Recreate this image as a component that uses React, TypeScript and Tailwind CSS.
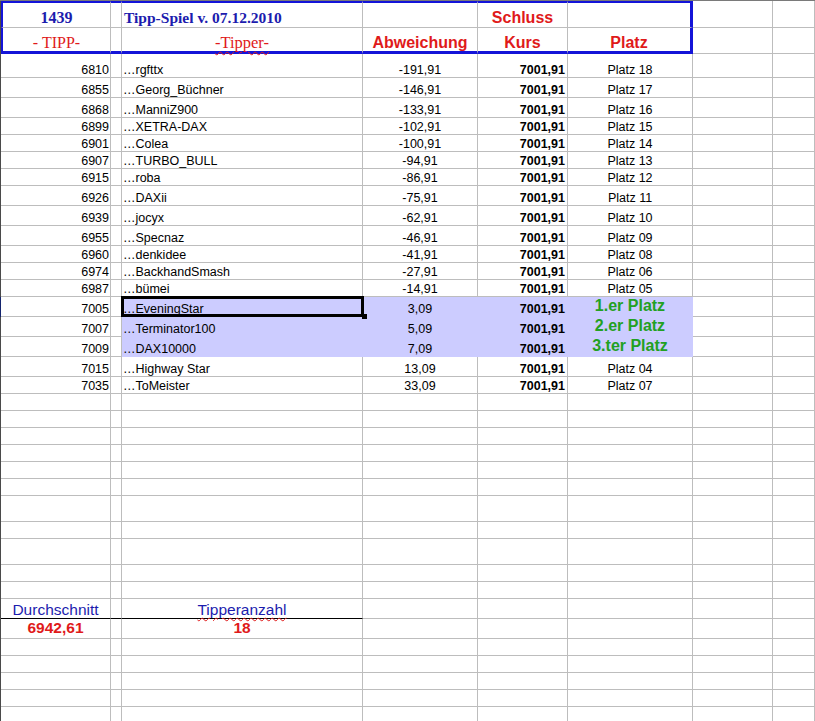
// Tipp-Spiel sheet — a spreadsheet-style ranking table of DAX guesses.
// Column widths and row heights mirror the grid of the original workbook.

import type { ReactNode } from "react";
import { twMerge } from "tailwind-merge";

const COL_W = [
  "w-[110px]",
  "w-[11px]",
  "w-[241px]",
  "w-[115px]",
  "w-[90px]",
  "w-[125px]",
  "w-[80px]",
  "flex-1",
];

const ROW_H: Record<number, string> = {
  17: "h-[17px]",
  20: "h-[20px]",
  24: "h-[24px]",
  26: "h-[26px]",
  27: "h-[27px]",
};

type Tip = {
  tipp: string;
  name: string;
  diff: string;
  platz: string;
  h: number;
  win?: boolean;
  sel?: boolean;
};

const tips: Tip[] = [
  { tipp: "6810", name: "rgfttx", diff: "-191,91", platz: "Platz 18", h: 24 },
  { tipp: "6855", name: "Georg_Büchner", diff: "-146,91", platz: "Platz 17", h: 20 },
  { tipp: "6868", name: "ManniZ900", diff: "-133,91", platz: "Platz 16", h: 20 },
  { tipp: "6899", name: "XETRA-DAX", diff: "-102,91", platz: "Platz 15", h: 17 },
  { tipp: "6901", name: "Colea", diff: "-100,91", platz: "Platz 14", h: 17 },
  { tipp: "6907", name: "TURBO_BULL", diff: "-94,91", platz: "Platz 13", h: 17 },
  { tipp: "6915", name: "roba", diff: "-86,91", platz: "Platz 12", h: 17 },
  { tipp: "6926", name: "DAXii", diff: "-75,91", platz: "Platz 11", h: 20 },
  { tipp: "6939", name: "jocyx", diff: "-62,91", platz: "Platz 10", h: 20 },
  { tipp: "6955", name: "Specnaz", diff: "-46,91", platz: "Platz 09", h: 20 },
  { tipp: "6960", name: "denkidee", diff: "-41,91", platz: "Platz 08", h: 17 },
  { tipp: "6974", name: "BackhandSmash", diff: "-27,91", platz: "Platz 06", h: 17 },
  { tipp: "6987", name: "bümei", diff: "-14,91", platz: "Platz 05", h: 17 },
  { tipp: "7005", name: "EveningStar", diff: "3,09", platz: "1.er Platz", h: 20, win: true, sel: true },
  { tipp: "7007", name: "Terminator100", diff: "5,09", platz: "2.er Platz", h: 20, win: true },
  { tipp: "7009", name: "DAX10000", diff: "7,09", platz: "3.ter Platz", h: 20, win: true },
  { tipp: "7015", name: "Highway Star", diff: "13,09", platz: "Platz 04", h: 20 },
  { tipp: "7035", name: "ToMeister", diff: "33,09", platz: "Platz 07", h: 17 },
];

const emptyAbove = [17, 17, 17, 17, 17, 17, 26, 17, 26, 17, 17];
const emptyBelow = [17, 17, 17, 17, 17];

function Cell({ col, className, children }: { col: number; className?: string; children?: ReactNode }) {
  return (
    <div
      className={twMerge(
        "flex shrink-0 items-end whitespace-nowrap border-b border-r border-[#bdbdbd]",
        COL_W[col],
        className,
      )}
    >
      {children}
    </div>
  );
}

function Row({ h, className, children }: { h: number; className?: string; children?: ReactNode }) {
  return <div className={twMerge("flex border-l border-[#4a4a4a]", ROW_H[h], className)}>{children}</div>;
}

function EmptyRow({ h }: { h: number }) {
  return (
    <Row h={h}>
      {COL_W.map((_, i) => (
        <Cell key={i} col={i} />
      ))}
    </Row>
  );
}

export default function App() {
  return (
    <div className="h-[721px] w-[815px] overflow-hidden border-t border-[#7a7a7a] bg-white font-['Liberation_Sans',Arial,sans-serif] text-[12.5px] leading-[14px] text-black">
      {/* header block, framed in blue */}
      <Row h={27}>
        <Cell col={0} className="justify-center border-l-2 border-t-2 border-l-[#1414d8] border-t-[#1414d8]">
          <span className="font-['Liberation_Serif','Times_New_Roman',serif] text-[16px] font-bold leading-[19px] text-[#1c1cae]">
            1439
          </span>
        </Cell>
        <Cell col={1} className="border-t-2 border-t-[#1414d8]" />
        <Cell col={2} className="border-t-2 border-t-[#1414d8] pl-[2px]">
          <span className="font-['Liberation_Serif','Times_New_Roman',serif] text-[15.5px] font-bold leading-[19px] text-[#1c1cae]">
            Tipp-Spiel v. 07.12.2010
          </span>
        </Cell>
        <Cell col={3} className="border-t-2 border-t-[#1414d8]" />
        <Cell col={4} className="justify-center border-t-2 border-t-[#1414d8]">
          <span className="text-[16px] font-bold leading-[19px] text-[#e01a1a]">Schluss</span>
        </Cell>
        <Cell col={5} className="border-r-[3px] border-t-2 border-r-[#1414d8] border-t-[#1414d8]" />
        <Cell col={6} />
        <Cell col={7} />
      </Row>
      <Row h={26}>
        <Cell col={0} className="justify-center border-b-[3px] border-l-2 border-b-[#1414d8] border-l-[#1414d8]">
          <span className="font-['Liberation_Serif','Times_New_Roman',serif] text-[16px] leading-[16px] text-[#e01a1a]">
            - TIPP-
          </span>
        </Cell>
        <Cell col={1} className="border-b-[3px] border-b-[#1414d8]" />
        <Cell col={2} className="justify-center border-b-[3px] border-b-[#1414d8]">
          <span className="font-['Liberation_Serif','Times_New_Roman',serif] text-[16.5px] leading-[16px] text-[#e01a1a] underline decoration-[#e01a1a] decoration-wavy decoration-1 underline-offset-[3px]">
            -Tipper-
          </span>
        </Cell>
        <Cell col={3} className="justify-center border-b-[3px] border-b-[#1414d8]">
          <span className="text-[16px] font-bold leading-[16px] text-[#e01a1a]">Abweichung</span>
        </Cell>
        <Cell col={4} className="justify-center border-b-[3px] border-b-[#1414d8]">
          <span className="text-[16px] font-bold leading-[16px] text-[#e01a1a]">Kurs</span>
        </Cell>
        <Cell col={5} className="justify-center border-b-[3px] border-r-[3px] border-b-[#1414d8] border-r-[#1414d8]">
          <span className="text-[16px] font-bold leading-[16px] text-[#e01a1a]">Platz</span>
        </Cell>
        <Cell col={6} />
        <Cell col={7} />
      </Row>

      {/* one row per tipper, sorted by guess */}
      {tips.map((t) => {
        const fill = t.win ? "bg-[#ccccff] border-[#ccccff]" : "";
        return (
          <Row key={t.tipp} h={t.h} className={t.sel ? "border-l-[#14246e]" : ""}>
            <Cell col={0} className="justify-end pr-px">
              {t.tipp}
            </Cell>
            <Cell col={1} />
            <Cell col={2} className={twMerge("relative pl-px", fill)}>
              …{t.name}
              {t.sel ? (
                <>
                  <div className="absolute -left-px -top-px z-10 h-[21px] w-[243px] border-[3px] border-black" />
                  <div className="absolute left-[240px] top-[17px] z-10 h-[5px] w-[5px] bg-black" />
                </>
              ) : null}
            </Cell>
            <Cell col={3} className={twMerge("justify-center", fill)}>
              {t.diff}
            </Cell>
            <Cell col={4} className={twMerge("justify-end pr-[2px] font-bold", fill)}>
              7001,91
            </Cell>
            <Cell col={5} className={twMerge("justify-center", fill)}>
              {t.win ? (
                <span className="text-[16px] font-bold leading-[20px] text-[#22a022]">{t.platz}</span>
              ) : (
                t.platz
              )}
            </Cell>
            <Cell col={6} />
            <Cell col={7} />
          </Row>
        );
      })}

      {emptyAbove.map((h, i) => (
        <EmptyRow key={`a${i}`} h={h} />
      ))}

      {/* summary */}
      <Row h={20}>
        <Cell col={0} className="justify-center border-b-black">
          <span className="text-[15.5px] leading-[17px] text-[#1c1cae]">Durchschnitt</span>
        </Cell>
        <Cell col={1} className="border-b-black" />
        <Cell col={2} className="justify-center border-b-black">
          <span className="text-[15.5px] leading-[17px] text-[#1c1cae] underline decoration-[#e01a1a] decoration-wavy decoration-1 underline-offset-[2px]">
            Tipperanzahl
          </span>
        </Cell>
        {[3, 4, 5, 6, 7].map((c) => (
          <Cell key={c} col={c} />
        ))}
      </Row>
      <Row h={20}>
        <Cell col={0} className="justify-center">
          <span className="text-[15.5px] font-bold leading-[20px] text-[#e01a1a]">6942,61</span>
        </Cell>
        <Cell col={1} />
        <Cell col={2} className="justify-center">
          <span className="text-[15.5px] font-bold leading-[20px] text-[#e01a1a]">18</span>
        </Cell>
        {[3, 4, 5, 6, 7].map((c) => (
          <Cell key={c} col={c} />
        ))}
      </Row>

      {emptyBelow.map((h, i) => (
        <EmptyRow key={`b${i}`} h={h} />
      ))}
    </div>
  );
}
